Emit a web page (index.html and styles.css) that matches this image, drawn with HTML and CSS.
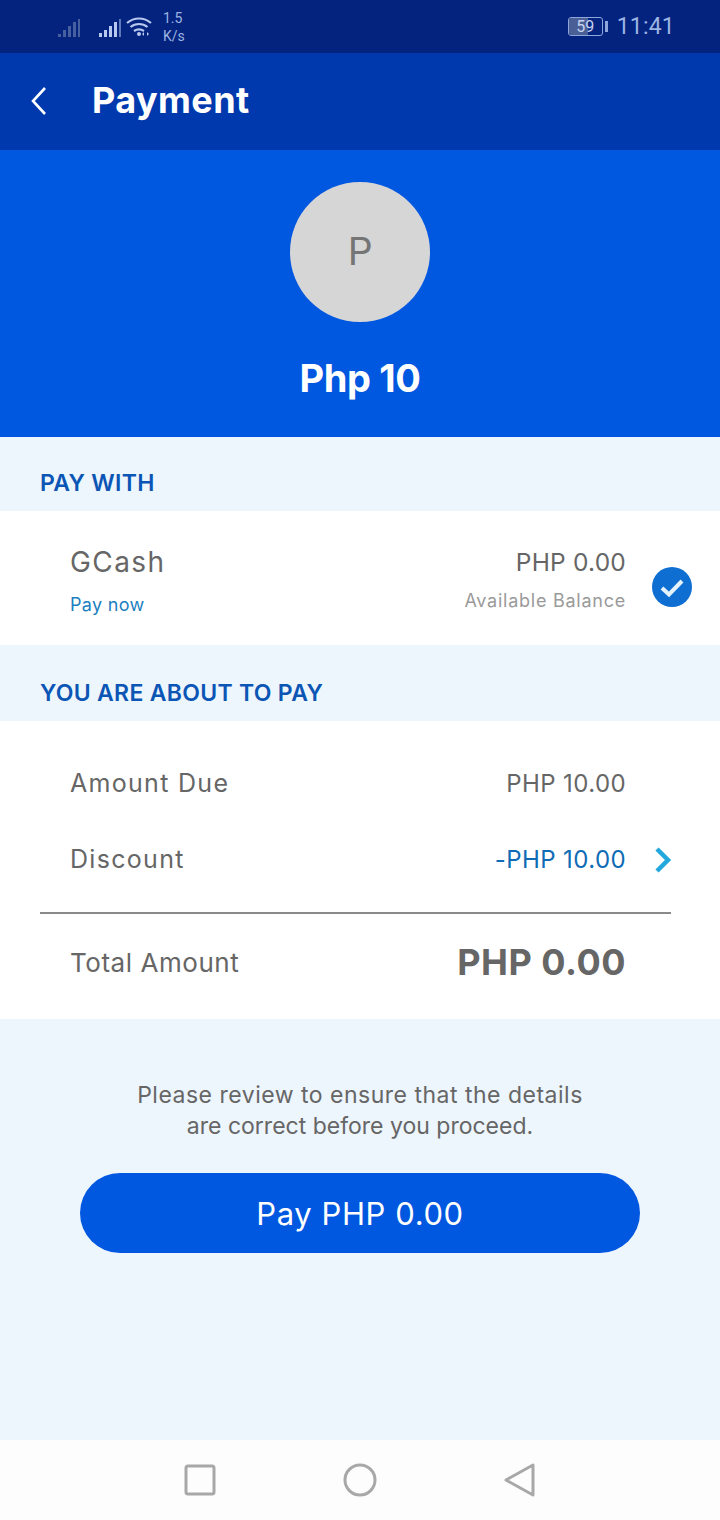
FILE: index.html
```html
<!DOCTYPE html>
<html lang="en">

<head>
    <meta charset="UTF-8">
    <meta name="viewport" content="width=device-width, initial-scale=1.0">
    <title>Payment</title>
    <link rel="stylesheet" href="styles.css">
</head>

<body>
    <div class="status-bar">
        <div class="status-left">
            <svg class="signal signal-dim" width="24" height="20" viewBox="0 0 24 20">
                <path d="M1 16h3v3H1zM6 12h3v7H6zM11 8h3v11h-3zM16 4h3v15h-3zM21 1h2v18h-2z" />
            </svg>
            <svg class="signal" width="24" height="20" viewBox="0 0 24 20">
                <path d="M1 15h3v4H1zM6 12h3v7H6zM11 8h3v11h-3zM16 4h3v15h-3z" />
                <path class="signal-off" d="M21 1h2v18h-2z" />
            </svg>
            <svg class="wifi" width="26" height="22" viewBox="0 0 26 22">
                <path d="M1 7c7-6 17-6 24 0M4.500 11c5-4 12-4 17 0M8 15c3-2 7-2 10 0" />
                <circle cx="13" cy="18" r="2" />
                <path class="wifi-arrows" d="M18 16v4l-2-2zM21 16v4l2-2z" />
            </svg>
            <div class="net-speed">
                <span>1.5</span>
                <span>K/s</span>
            </div>
        </div>
        <div class="status-right">
            <div class="battery">
                <div class="battery-body">
                    <div class="battery-fill"></div>
                    <span class="battery-num">59</span>
                </div>
                <div class="battery-tip"></div>
            </div>
            <span class="clock">11:41</span>
        </div>
    </div>

    <header class="top-bar">
        <svg class="back-icon" width="16" height="30" viewBox="0 0 16 30">
            <path d="M14 2 2 15l12 13" />
        </svg>
        <h1>Payment</h1>
    </header>

    <section class="hero">
        <div class="avatar">P</div>
        <div class="hero-amount">Php 10</div>
    </section>

    <h2 class="section-label label-first">PAY WITH</h2>

    <section class="card pay-card">
        <div class="pay-left">
            <div class="pay-name">GCash</div>
            <div class="pay-now">Pay now</div>
        </div>
        <div class="pay-right">
            <div class="pay-balance">PHP 0.00</div>
            <div class="pay-available">Available Balance</div>
        </div>
        <svg class="check-icon" width="40" height="40" viewBox="0 0 40 40">
            <circle cx="20" cy="20" r="20" />
            <path d="M10 21l7 6.500L30 14" />
        </svg>
    </section>

    <h2 class="section-label">YOU ARE ABOUT TO PAY</h2>

    <section class="card summary-card">
        <div class="summary-row">
            <span>Amount Due</span>
            <span class="summary-value">PHP 10.00</span>
        </div>
        <div class="summary-row">
            <span>Discount</span>
            <span class="summary-value discount">-PHP 10.00</span>
            <svg class="chevron-icon" width="18" height="28" viewBox="0 0 18 28">
                <path d="M3 3l11 11L3 25" />
            </svg>
        </div>
        <div class="total-row">
            <span>Total Amount</span>
            <span class="total-value">PHP 0.00</span>
        </div>
    </section>

    <main class="review">
        <p>Please review to ensure that the details<br><span class="review-tight">are correct before you proceed.</span></p>
        <button class="pay-button">Pay PHP 0.00</button>
    </main>

    <nav class="nav-bar">
        <svg width="32" height="32" viewBox="0 0 32 32">
            <rect x="2" y="2" width="28" height="28" rx="2" />
        </svg>
        <svg width="34" height="34" viewBox="0 0 34 34">
            <circle cx="17" cy="17" r="15" />
        </svg>
        <svg width="32" height="36" viewBox="0 0 32 36">
            <path d="M2 18 29 3v30z" />
        </svg>
    </nav>
</body>

</html>
```

FILE: styles.css
```css
* {
    box-sizing: border-box;
}

html,
body {
    margin: 0;
    padding: 0;
}

body {
    width: 720px;
    height: 1520px;
    display: flex;
    flex-direction: column;
    overflow: hidden;
    background-color: #edf5fd;
    color: #666;
    font-family: Inter, "Liberation Sans", sans-serif;
}

/* status bar */
.status-bar {
    height: 53px;
    flex-shrink: 0;
    display: flex;
    align-items: center;
    justify-content: space-between;
    padding: 0 45px 0 57px;
    background-color: #03237f;
    color: #9db4e2;
}

.status-left {
    display: flex;
    align-items: center;
}

.signal {
    fill: #b9c8ee;
    margin-right: 4px;
    margin-top: 2px;
}

.signal-dim {
    fill: #46609f;
    margin-right: 17px;
}

.signal-off {
    fill: #5e78b8;
}

.wifi {
    margin-right: 11px;
    fill: none;
    stroke: #b9c8ee;
    stroke-width: 2.2;
}

.wifi circle,
.wifi-arrows {
    fill: #b9c8ee;
    stroke: none;
}

.net-speed {
    display: flex;
    flex-direction: column;
    font-family: Roboto, sans-serif;
    font-size: 14px;
    line-height: 18px;
    padding-top: 1px;
}

.status-right {
    display: flex;
    align-items: center;
}

.battery {
    display: flex;
    align-items: center;
    margin-right: 9px;
}

.battery-body {
    position: relative;
    width: 35px;
    height: 19px;
    border: 1px solid #8ea6da;
    border-radius: 3px;
    overflow: hidden;
}

.battery-fill {
    width: 58%;
    height: 100%;
    background-color: #4a5f96;
}

.battery-num {
    position: absolute;
    top: 0;
    left: 0;
    right: 0;
    text-align: center;
    color: #c6d2ee;
    font-family: Roboto, sans-serif;
    font-size: 16px;
    line-height: 17px;
}

.battery-tip {
    width: 3px;
    height: 11px;
    margin-left: 2px;
    background-color: #8ea6da;
}

.clock {
    font-family: Roboto, sans-serif;
    font-size: 23px;
    letter-spacing: 0.2px;
}

/* title bar */
.top-bar {
    height: 97px;
    flex-shrink: 0;
    display: flex;
    align-items: center;
    padding: 0 0 2px 31px;
    background-color: #0039ae;
}

.back-icon {
    fill: none;
    stroke: #fff;
    stroke-width: 2.6;
    margin-right: 45px;
}

.top-bar h1 {
    margin: 0 0 2px;
    color: #fff;
    font-size: 36px;
    font-weight: 700;
    letter-spacing: 0.4px;
}

/* amount */
.hero {
    height: 287px;
    flex-shrink: 0;
    display: flex;
    flex-direction: column;
    align-items: center;
    padding-top: 32px;
    background-color: #0057e0;
}

.avatar {
    width: 140px;
    height: 140px;
    display: flex;
    align-items: center;
    justify-content: center;
    border-radius: 50%;
    background-color: #d6d6d6;
    color: #757575;
    font-family: Roboto, sans-serif;
    font-size: 38px;
}

.hero-amount {
    margin-top: 32px;
    color: #fff;
    font-size: 38px;
    font-weight: 700;
    line-height: 48px;
    letter-spacing: -0.4px;
}

.section-label {
    height: 76px;
    flex-shrink: 0;
    margin: 0;
    padding: 33px 0 0 40px;
    color: #0b55b5;
    font-size: 23px;
    font-weight: 600;
    line-height: 30px;
    letter-spacing: 0.3px;
}

.label-first {
    height: 74px;
    padding-top: 31px;
}

.card {
    flex-shrink: 0;
    background-color: #fff;
}

/* pay with */
.pay-card {
    height: 134px;
    display: flex;
    align-items: flex-start;
    padding: 34px 28px 0 70px;
}

.pay-left {
    flex-grow: 1;
}

.pay-name {
    font-size: 28px;
    line-height: 34px;
    letter-spacing: 1.4px;
}

.pay-now {
    margin-top: 14px;
    color: #1b7fc0;
    font-size: 18px;
    line-height: 24px;
    letter-spacing: 0.3px;
}

.pay-right {
    text-align: right;
}

.pay-balance {
    font-size: 24.500px;
    line-height: 34px;
    letter-spacing: 0.2px;
}

.pay-available {
    margin-top: 10px;
    color: #9a9a9a;
    font-size: 18px;
    line-height: 24px;
    letter-spacing: 0.75px;
}

.check-icon {
    flex-shrink: 0;
    margin: 22px 0 0 26px;
    fill: #0f6ed1;
}

.check-icon path {
    fill: none;
    stroke: #e4f3fb;
    stroke-width: 4;
}

/* summary */
.summary-card {
    height: 298px;
    padding: 0 49px 0 40px;
}

.summary-row {
    position: relative;
    height: 76px;
    display: flex;
    align-items: center;
    justify-content: space-between;
    padding: 0 45px 0 30px;
    font-size: 25px;
    letter-spacing: 1.3px;
}

.summary-row:first-child {
    height: 100px;
    padding-top: 24px;
}

.summary-value {
    font-size: 24px;
    letter-spacing: 0.4px;
}

.discount {
    color: #0f6bb5;
}

.chevron-icon {
    position: absolute;
    right: -1px;
    top: 25px;
    fill: none;
    stroke: #22a8dc;
    stroke-width: 4.500;
}

.total-row {
    height: 98px;
    display: flex;
    align-items: center;
    justify-content: space-between;
    margin-top: 15px;
    padding: 0 45px 0 30px;
    border-top: 2px solid #8a8a8a;
    font-size: 26px;
    letter-spacing: 0.55px;
}

.total-value {
    font-size: 36px;
    font-weight: 700;
    letter-spacing: 0.5px;
}

/* review */
.review {
    flex-grow: 1;
    display: flex;
    flex-direction: column;
    align-items: center;
    padding-top: 61px;
}

.review p {
    margin: 0 0 31px;
    text-align: center;
    font-size: 23px;
    line-height: 31px;
    letter-spacing: 0.5px;
}

.review-tight {
    letter-spacing: 0;
}

.pay-button {
    width: 560px;
    height: 80px;
    border: none;
    border-radius: 40px;
    background-color: #0057e0;
    color: #fff;
    font-family: Inter, "Liberation Sans", sans-serif;
    font-size: 31px;
    letter-spacing: 0.6px;
}

/* android nav */
.nav-bar {
    height: 80px;
    flex-shrink: 0;
    display: flex;
    align-items: center;
    justify-content: space-between;
    padding: 0 184px;
    background-color: #fdfdfd;
}

.nav-bar svg {
    fill: none;
    stroke: #a8a8a8;
    stroke-width: 3;
    stroke-linejoin: round;
}
```
